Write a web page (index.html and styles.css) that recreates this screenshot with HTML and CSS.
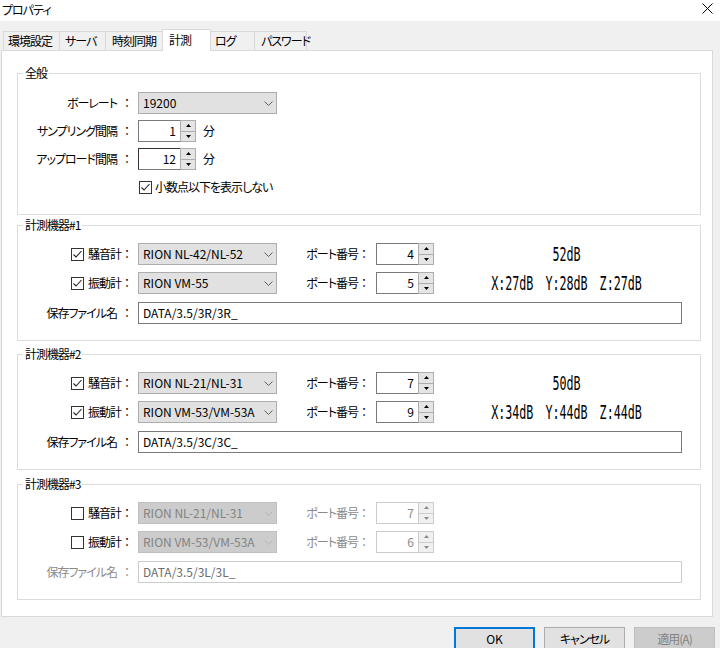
FILE: index.html
```html
<!DOCTYPE html>
<html lang="ja">
<head>
<meta charset="utf-8">
<title>プロパティ</title>
<link rel="stylesheet" href="styles.css">
</head>
<body>
<div class="titlebar">
  <span class="title">プロパティ</span>
  <svg class="close" width="11" height="11" viewBox="0 0 11 11"><path d="M0.5 0.5L10.5 10.5M10.5 0.5L0.5 10.5" stroke="#000" stroke-width="1" fill="none"/></svg>
</div>
<div class="tabs">
  <div class="tab w-env">環境設定</div>
  <div class="tab w-srv">サーバ</div>
  <div class="tab w-time">時刻同期</div>
  <div class="tab active w-meas">計測</div>
  <div class="tab w-log">ログ</div>
  <div class="tab w-pw">パスワード</div>
</div>
<div class="panel">
  <div class="group general">
    <div class="group-title">全般</div>
    <div class="row">
      <div class="lead">ボーレート<span class="colon">：</span></div>
      <div class="select"><span class="latin">19200</span><svg class="chev" width="9" height="5" viewBox="0 0 9 5"><path d="M0.5 0.5L4.5 4.5L8.5 0.5" stroke="#606060" fill="none"/></svg></div>
    </div>
    <div class="row">
      <div class="lead">サンプリング間隔<span class="colon">：</span></div>
      <div class="spin"><div class="spin-val">1</div><div class="spin-btns"><div class="spin-btn"><svg width="5" height="3" viewBox="0 0 5 3"><path d="M0 3L2.5 0L5 3Z" fill="#000"/></svg></div><div class="spin-btn"><svg width="5" height="3" viewBox="0 0 5 3"><path d="M0 0L2.5 3L5 0Z" fill="#000"/></svg></div></div></div>
      <span class="unit">分</span>
    </div>
    <div class="row">
      <div class="lead">アップロード間隔<span class="colon">：</span></div>
      <div class="spin"><div class="spin-val focus">12</div><div class="spin-btns"><div class="spin-btn"><svg width="5" height="3" viewBox="0 0 5 3"><path d="M0 3L2.5 0L5 3Z" fill="#000"/></svg></div><div class="spin-btn"><svg width="5" height="3" viewBox="0 0 5 3"><path d="M0 0L2.5 3L5 0Z" fill="#000"/></svg></div></div></div>
      <span class="unit">分</span>
    </div>
    <div class="row check-row">
      <span class="checkbox"><svg width="11" height="11" viewBox="0 0 11 11"><path d="M1.5 5.5L4 8L9.5 2" stroke="#222" stroke-width="1.1" fill="none"/></svg></span>
      <span>小数点以下を表示しない</span>
    </div>
  </div>

  <div class="group dev dev1">
    <div class="group-title">計測機器#1</div>
    <div class="row">
      <div class="lead"><span class="checkbox"><svg width="11" height="11" viewBox="0 0 11 11"><path d="M1.5 5.5L4 8L9.5 2" stroke="#222" stroke-width="1.1" fill="none"/></svg></span><span>騒音計<span class="colon">：</span></span></div>
      <div class="select"><span class="latin">RION NL-42/NL-52</span><svg class="chev" width="9" height="5" viewBox="0 0 9 5"><path d="M0.5 0.5L4.5 4.5L8.5 0.5" stroke="#606060" fill="none"/></svg></div>
      <div class="port-label">ポート番号<span class="colon">：</span></div>
      <div class="spin"><div class="spin-val">4</div><div class="spin-btns"><div class="spin-btn"><svg width="5" height="3" viewBox="0 0 5 3"><path d="M0 3L2.5 0L5 3Z" fill="#000"/></svg></div><div class="spin-btn"><svg width="5" height="3" viewBox="0 0 5 3"><path d="M0 0L2.5 3L5 0Z" fill="#000"/></svg></div></div></div>
      <div class="readout"><span>52dB</span></div>
    </div>
    <div class="row">
      <div class="lead"><span class="checkbox"><svg width="11" height="11" viewBox="0 0 11 11"><path d="M1.5 5.5L4 8L9.5 2" stroke="#222" stroke-width="1.1" fill="none"/></svg></span><span>振動計<span class="colon">：</span></span></div>
      <div class="select"><span class="latin">RION VM-55</span><svg class="chev" width="9" height="5" viewBox="0 0 9 5"><path d="M0.5 0.5L4.5 4.5L8.5 0.5" stroke="#606060" fill="none"/></svg></div>
      <div class="port-label">ポート番号<span class="colon">：</span></div>
      <div class="spin"><div class="spin-val">5</div><div class="spin-btns"><div class="spin-btn"><svg width="5" height="3" viewBox="0 0 5 3"><path d="M0 3L2.5 0L5 3Z" fill="#000"/></svg></div><div class="spin-btn"><svg width="5" height="3" viewBox="0 0 5 3"><path d="M0 0L2.5 3L5 0Z" fill="#000"/></svg></div></div></div>
      <div class="readout"><span>X:27dB</span><span>Y:28dB</span><span>Z:27dB</span></div>
    </div>
    <div class="row file-row">
      <div class="lead">保存ファイル名<span class="colon">：</span></div>
      <div class="field">DATA/3.5/3R/3R_</div>
    </div>
  </div>

  <div class="group dev dev2">
    <div class="group-title">計測機器#2</div>
    <div class="row">
      <div class="lead"><span class="checkbox"><svg width="11" height="11" viewBox="0 0 11 11"><path d="M1.5 5.5L4 8L9.5 2" stroke="#222" stroke-width="1.1" fill="none"/></svg></span><span>騒音計<span class="colon">：</span></span></div>
      <div class="select"><span class="latin">RION NL-21/NL-31</span><svg class="chev" width="9" height="5" viewBox="0 0 9 5"><path d="M0.5 0.5L4.5 4.5L8.5 0.5" stroke="#606060" fill="none"/></svg></div>
      <div class="port-label">ポート番号<span class="colon">：</span></div>
      <div class="spin"><div class="spin-val">7</div><div class="spin-btns"><div class="spin-btn"><svg width="5" height="3" viewBox="0 0 5 3"><path d="M0 3L2.5 0L5 3Z" fill="#000"/></svg></div><div class="spin-btn"><svg width="5" height="3" viewBox="0 0 5 3"><path d="M0 0L2.5 3L5 0Z" fill="#000"/></svg></div></div></div>
      <div class="readout"><span>50dB</span></div>
    </div>
    <div class="row">
      <div class="lead"><span class="checkbox"><svg width="11" height="11" viewBox="0 0 11 11"><path d="M1.5 5.5L4 8L9.5 2" stroke="#222" stroke-width="1.1" fill="none"/></svg></span><span>振動計<span class="colon">：</span></span></div>
      <div class="select"><span class="latin">RION VM-53/VM-53A</span><svg class="chev" width="9" height="5" viewBox="0 0 9 5"><path d="M0.5 0.5L4.5 4.5L8.5 0.5" stroke="#606060" fill="none"/></svg></div>
      <div class="port-label">ポート番号<span class="colon">：</span></div>
      <div class="spin"><div class="spin-val">9</div><div class="spin-btns"><div class="spin-btn"><svg width="5" height="3" viewBox="0 0 5 3"><path d="M0 3L2.5 0L5 3Z" fill="#000"/></svg></div><div class="spin-btn"><svg width="5" height="3" viewBox="0 0 5 3"><path d="M0 0L2.5 3L5 0Z" fill="#000"/></svg></div></div></div>
      <div class="readout"><span>X:34dB</span><span>Y:44dB</span><span>Z:44dB</span></div>
    </div>
    <div class="row file-row">
      <div class="lead">保存ファイル名<span class="colon">：</span></div>
      <div class="field">DATA/3.5/3C/3C_</div>
    </div>
  </div>

  <div class="group dev dev3 disabled">
    <div class="group-title">計測機器#3</div>
    <div class="row">
      <div class="lead"><span class="checkbox"></span><span class="on">騒音計<span class="colon">：</span></span></div>
      <div class="select"><span class="latin">RION NL-21/NL-31</span><svg class="chev" width="9" height="5" viewBox="0 0 9 5"><path d="M0.5 0.5L4.5 4.5L8.5 0.5" stroke="#b4b4b4" fill="none"/></svg></div>
      <div class="port-label">ポート番号<span class="colon">：</span></div>
      <div class="spin"><div class="spin-val">7</div><div class="spin-btns"><div class="spin-btn"><svg width="5" height="3" viewBox="0 0 5 3"><path d="M0 3L2.5 0L5 3Z" fill="#8a8a8a"/></svg></div><div class="spin-btn"><svg width="5" height="3" viewBox="0 0 5 3"><path d="M0 0L2.5 3L5 0Z" fill="#8a8a8a"/></svg></div></div></div>
      <div class="readout"></div>
    </div>
    <div class="row">
      <div class="lead"><span class="checkbox"></span><span class="on">振動計<span class="colon">：</span></span></div>
      <div class="select"><span class="latin">RION VM-53/VM-53A</span><svg class="chev" width="9" height="5" viewBox="0 0 9 5"><path d="M0.5 0.5L4.5 4.5L8.5 0.5" stroke="#b4b4b4" fill="none"/></svg></div>
      <div class="port-label">ポート番号<span class="colon">：</span></div>
      <div class="spin"><div class="spin-val">6</div><div class="spin-btns"><div class="spin-btn"><svg width="5" height="3" viewBox="0 0 5 3"><path d="M0 3L2.5 0L5 3Z" fill="#8a8a8a"/></svg></div><div class="spin-btn"><svg width="5" height="3" viewBox="0 0 5 3"><path d="M0 0L2.5 3L5 0Z" fill="#8a8a8a"/></svg></div></div></div>
      <div class="readout"></div>
    </div>
    <div class="row file-row">
      <div class="lead">保存ファイル名<span class="colon">：</span></div>
      <div class="field">DATA/3.5/3L/3L_</div>
    </div>
  </div>
</div>
<div class="buttons">
  <div class="btn primary latin">OK</div>
  <div class="btn">キャンセル</div>
  <div class="btn off">適用(A)</div>
</div>
</body>
</html>
```
FILE: styles.css
```css
html, body {
  margin: 0;
  padding: 0;
}
body {
  width: 720px;
  height: 648px;
  overflow: hidden;
  background: #f0f0f0;
  color: #000;
  font-family: "Noto Sans CJK JP", "Noto Sans", sans-serif;
  font-size: 12px;
  line-height: 14px;
  font-feature-settings: "palt" 1;
  letter-spacing: -1px;
}
.latin {
  letter-spacing: 0;
}
.colon {
  font-feature-settings: normal;
  letter-spacing: 0;
}

/* title bar */
.titlebar {
  height: 21px;
  background: #fff;
  display: flex;
  align-items: center;
  justify-content: space-between;
  padding: 0 7px 0 2px;
}
.title {
  margin-top: -2px;
}
.close {
  display: block;
  margin-top: -4px;
}

/* tabs */
.tabs {
  position: relative;
  z-index: 1;
  display: flex;
  align-items: flex-end;
  height: 21px;
  margin-top: 8px;
  padding-left: 3px;
}
.tab {
  box-sizing: border-box;
  height: 19px;
  border: 1px solid #d9d9d9;
  border-bottom: none;
  margin-right: -1px;
  padding-left: 5px;
  line-height: 18px;
  background: #f0f0f0;
  white-space: nowrap;
}
.tab.active {
  height: 22px;
  margin-bottom: -1px;
  line-height: 20px;
  padding-left: 6px;
  background: #fff;
}
.w-env { width: 57px; padding-left: 4px; }
.w-srv { width: 47px; }
.w-time { width: 58px; padding-left: 6px; }
.w-meas { width: 49px; }
.w-log { width: 45px; padding-left: 4px; }
.w-pw { width: 53px; padding-left: 6px; }

/* panel */
.panel {
  box-sizing: border-box;
  width: 712px;
  height: 567px;
  margin-left: 1px;
  border: 1px solid #d9d9d9;
  background: #fff;
  padding: 0 11px 0 15px;
}

/* group boxes */
.group {
  position: relative;
  border: 1px solid #dcdcdc;
  padding: 17px 0 16px;
  display: flex;
  flex-direction: column;
  gap: 7px;
}
.group-title {
  position: absolute;
  top: -8px;
  left: 5px;
  padding: 0 2px;
  background: #fff;
  line-height: 14px;
}
.general {
  margin-top: 22px;
  padding: 18px 0 16px;
  gap: 6px;
}
.dev1 { margin-top: 10px; }
.dev2 { margin-top: 13px; }
.dev3 { margin-top: 14px; }

.row {
  display: flex;
  align-items: center;
  height: 22px;
}
.file-row {
  margin-top: 1px;
}
.lead {
  flex: none;
  width: 115px;
  margin-right: 5px;
  display: flex;
  justify-content: flex-end;
  align-items: center;
  gap: 4px;
  white-space: nowrap;
}
.port-label {
  flex: none;
  width: 93px;
  margin-right: 6px;
  text-align: right;
  white-space: nowrap;
}
.unit {
  margin-left: 7px;
}
.check-row {
  padding-left: 121px;
  gap: 3px;
}

/* checkbox */
.checkbox {
  box-sizing: border-box;
  width: 13px;
  height: 13px;
  border: 1px solid #333;
  background: #fff;
  display: flex;
  align-items: center;
  justify-content: center;
  flex: none;
}
.checkbox svg {
  display: block;
}

/* dropdown */
.select {
  box-sizing: border-box;
  flex: none;
  width: 139px;
  height: 22px;
  border: 1px solid #adadad;
  background: #e1e1e1;
  display: flex;
  align-items: center;
  justify-content: space-between;
  padding: 0 3px 0 4px;
  white-space: nowrap;
}
.chev {
  display: block;
}

/* spin box */
.spin {
  flex: none;
  display: flex;
  width: 58px;
  height: 22px;
  letter-spacing: 0;
}
.spin-val {
  box-sizing: border-box;
  flex: 1;
  border: 1px solid #7a7a7a;
  border-right: none;
  background: #fff;
  text-align: right;
  padding-right: 4px;
  line-height: 20px;
}
.spin-val.focus {
  border-top-color: #333;
  border-left-color: #333;
}
.spin-btns {
  flex: none;
  width: 16px;
  display: flex;
  flex-direction: column;
}
.spin-btn {
  box-sizing: border-box;
  flex: 1;
  border: 1px solid #adadad;
  background: #e5e5e5;
  display: flex;
  align-items: center;
  justify-content: center;
}
.spin-btn + .spin-btn {
  border-top: none;
}
.spin-btn svg {
  display: block;
}

/* text field */
.field {
  box-sizing: border-box;
  flex: none;
  width: 544px;
  height: 22px;
  border: 1px solid #7a7a7a;
  padding-left: 4px;
  line-height: 20px;
  white-space: nowrap;
  letter-spacing: 0;
}

/* readout */
.readout {
  flex: 1;
  display: flex;
  justify-content: center;
  gap: 12px;
  font-family: "DejaVu Sans Mono", monospace;
  font-size: 11.7px;
  line-height: 14px;
  letter-spacing: 0;
  transform: scaleY(1.7);
  padding-right: 1px;
}

/* disabled group */
.disabled .lead,
.disabled .port-label,
.disabled .spin-val {
  color: #8a8a8a;
}
.disabled .lead .on {
  color: #000;
}
.disabled .select {
  background: #cccccc;
  border-color: #bfbfbf;
  color: #838383;
}
.disabled .spin-val {
  border-color: #cccccc;
}
.disabled .spin-btn {
  border-color: #cccccc;
  background: #f0f0f0;
}
.disabled .field {
  border-color: #cccccc;
  color: #6d6d6d;
}

/* buttons */
.buttons {
  display: flex;
  justify-content: flex-end;
  gap: 9px;
  padding-right: 5px;
  margin-top: 10px;
}
.btn {
  box-sizing: border-box;
  width: 81px;
  height: 24px;
  border: 1px solid #adadad;
  background: #e1e1e1;
  text-align: center;
  line-height: 21px;
  white-space: nowrap;
}
.btn.primary {
  border: 2px solid #0078d7;
  line-height: 19px;
}
.btn.off {
  background: #cccccc;
  border-color: #bfbfbf;
  color: #838383;
}
```
